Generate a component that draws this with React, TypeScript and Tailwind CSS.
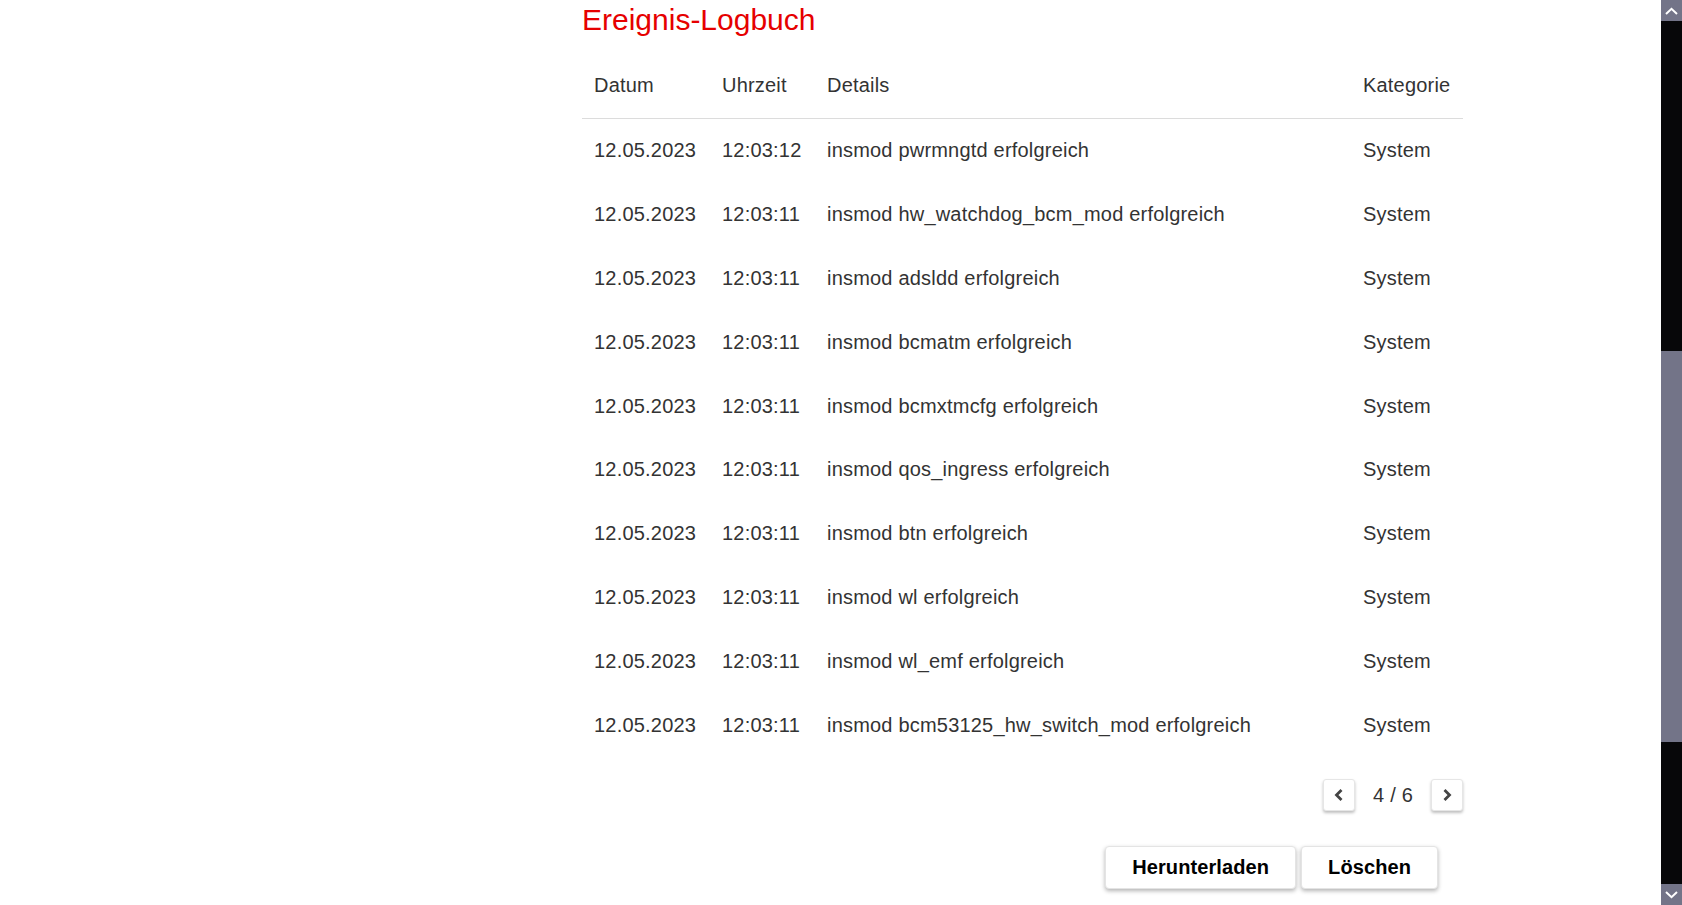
import React from "react";

const rows = [
  { date: "12.05.2023", time: "12:03:12", details: "insmod pwrmngtd erfolgreich", cat: "System" },
  { date: "12.05.2023", time: "12:03:11", details: "insmod hw_watchdog_bcm_mod erfolgreich", cat: "System" },
  { date: "12.05.2023", time: "12:03:11", details: "insmod adsldd erfolgreich", cat: "System" },
  { date: "12.05.2023", time: "12:03:11", details: "insmod bcmatm erfolgreich", cat: "System" },
  { date: "12.05.2023", time: "12:03:11", details: "insmod bcmxtmcfg erfolgreich", cat: "System" },
  { date: "12.05.2023", time: "12:03:11", details: "insmod qos_ingress erfolgreich", cat: "System" },
  { date: "12.05.2023", time: "12:03:11", details: "insmod btn erfolgreich", cat: "System" },
  { date: "12.05.2023", time: "12:03:11", details: "insmod wl erfolgreich", cat: "System" },
  { date: "12.05.2023", time: "12:03:11", details: "insmod wl_emf erfolgreich", cat: "System" },
  { date: "12.05.2023", time: "12:03:11", details: "insmod bcm53125_hw_switch_mod erfolgreich", cat: "System" },
];

const PageButton = ({ dir }: { dir: "prev" | "next" }) => (
  <button className="w-8 h-8 flex items-center justify-center bg-white rounded-[3px] border border-[#e6e6e6] shadow-[0_2px_3px_rgba(0,0,0,0.25)]">
    <svg width="12" height="14" viewBox="0 0 12 14" fill="none">
      {dir === "prev" ? (
        <path d="M8.5 2 L3.5 7 L8.5 12" stroke="#444" strokeWidth="2.8" />
      ) : (
        <path d="M3.5 2 L8.5 7 L3.5 12" stroke="#444" strokeWidth="2.8" />
      )}
    </svg>
  </button>
);

const ActionButton = ({ label }: { label: string }) => (
  <button className="h-[43px] px-[26px] bg-white rounded-[4px] border border-[#e4e4e4] shadow-[0_2px_4px_rgba(0,0,0,0.3)] text-[20px] font-bold text-black tracking-[0.1px]">
    {label}
  </button>
);

const Scrollbar = () => (
  <div className="w-[21px] h-screen flex flex-col bg-[#070709] shrink-0">
    <div className="h-[21px] bg-[#737488] flex items-center justify-center">
      <svg width="13" height="8" viewBox="0 0 13 8" fill="none">
        <path d="M1 7 L6.5 1.8 L12 7" stroke="white" strokeWidth="2" />
      </svg>
    </div>
    <div className="h-[330px]" />
    <div className="h-[391px] bg-[#737488]" />
    <div className="flex-1" />
    <div className="h-[21px] bg-[#737488] flex items-center justify-center">
      <svg width="13" height="8" viewBox="0 0 13 8" fill="none">
        <path d="M1 1 L6.5 6.2 L12 1" stroke="white" strokeWidth="2" />
      </svg>
    </div>
  </div>
);

export default function App() {
  return (
    <div className="flex w-full h-screen overflow-hidden bg-white font-['Liberation_Sans',Arial,sans-serif]">
      <div className="flex-1 pl-[582px]">
        <div className="w-[881px]">
          <h1 className="text-[30px] leading-[34px] pt-[3px] text-[#e60000] font-normal">Ereignis-Logbuch</h1>

          <table className="w-full table-fixed border-collapse mt-[15px] text-[20px] text-[#333] tracking-[0.2px]">
            <colgroup>
              <col className="w-[128px]" />
              <col className="w-[105px]" />
              <col className="w-[536px]" />
              <col className="w-[112px]" />
            </colgroup>
            <thead>
              <tr className="h-[66px] border-b border-[#dcdcdc]">
                <th className="px-3 text-left font-normal">Datum</th>
                <th className="px-3 text-left font-normal">Uhrzeit</th>
                <th className="px-3 text-left font-normal">Details</th>
                <th className="px-3 text-left font-normal">Kategorie</th>
              </tr>
            </thead>
            <tbody>
              {rows.map((r, i) => (
                <tr key={i} className="h-[63.9px]">
                  <td className="px-3">{r.date}</td>
                  <td className="px-3">{r.time}</td>
                  <td className="px-3 whitespace-nowrap">{r.details}</td>
                  <td className="px-3">{r.cat}</td>
                </tr>
              ))}
            </tbody>
          </table>

          <div className="flex items-center justify-end mt-[22px] text-[20px] text-[#333] tracking-[0.2px]">
            <PageButton dir="prev" />
            <span className="px-[18px]">4 / 6</span>
            <PageButton dir="next" />
          </div>

          <div className="flex justify-end gap-[5px] pr-[25px] mt-[35px]">
            <ActionButton label="Herunterladen" />
            <ActionButton label="Löschen" />
          </div>
        </div>
      </div>
      <Scrollbar />
    </div>
  );
}
